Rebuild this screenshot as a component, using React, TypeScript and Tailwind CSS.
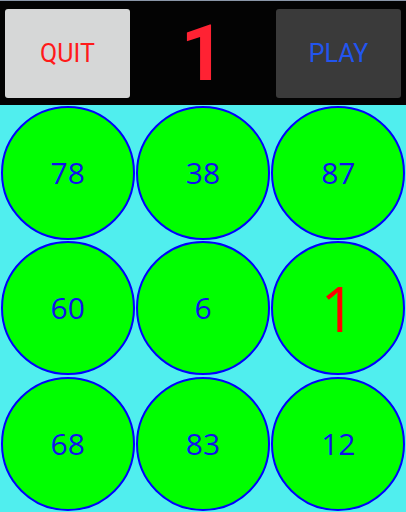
const cells: { label: string; hit?: boolean }[] = [
  { label: '78' },
  { label: '38' },
  { label: '87' },
  { label: '60' },
  { label: '6' },
  { label: '1', hit: true },
  { label: '68' },
  { label: '83' },
  { label: '12' },
];

export default function App() {
  return (
    <div className="w-[406px] h-[512px] overflow-hidden bg-[#50eeee] flex flex-col">
      <div className="h-px bg-[#8a96a8]" />
      <div className="h-[104px] bg-[#030303] flex items-start px-[5px] pt-[8px]">
        <button className="w-[125px] h-[89px] rounded-[3px] bg-[#d6d7d7] text-[#ff1a1a] text-[25px] font-['Roboto',sans-serif]">
          QUIT
        </button>
        <div className="flex-1 flex justify-center">
          <span className="text-[78px] leading-[89px] font-bold text-[#ff2233] font-['Roboto',sans-serif]">
            1
          </span>
        </div>
        <button className="w-[125px] h-[89px] rounded-[3px] bg-[#3a3a3a] text-[#2255ee] text-[25px] font-['Roboto',sans-serif]">
          PLAY
        </button>
      </div>
      <div className="grid grid-cols-3 grid-rows-3 flex-1">
        {cells.map((c, i) => (
          <div key={i} className="flex items-center justify-center">
            <div className="w-[134px] h-[134px] shrink-0 rounded-full bg-[#00ff00] border-2 border-[#0000ff] flex items-center justify-center font-['Open_Sans',sans-serif]">
              {c.hit ? (
                <span className="text-[#ff0000] text-[62px] leading-none">{c.label}</span>
              ) : (
                <span className="text-[#1010ee] text-[30px] leading-none">{c.label}</span>
              )}
            </div>
          </div>
        ))}
      </div>
    </div>
  );
}
